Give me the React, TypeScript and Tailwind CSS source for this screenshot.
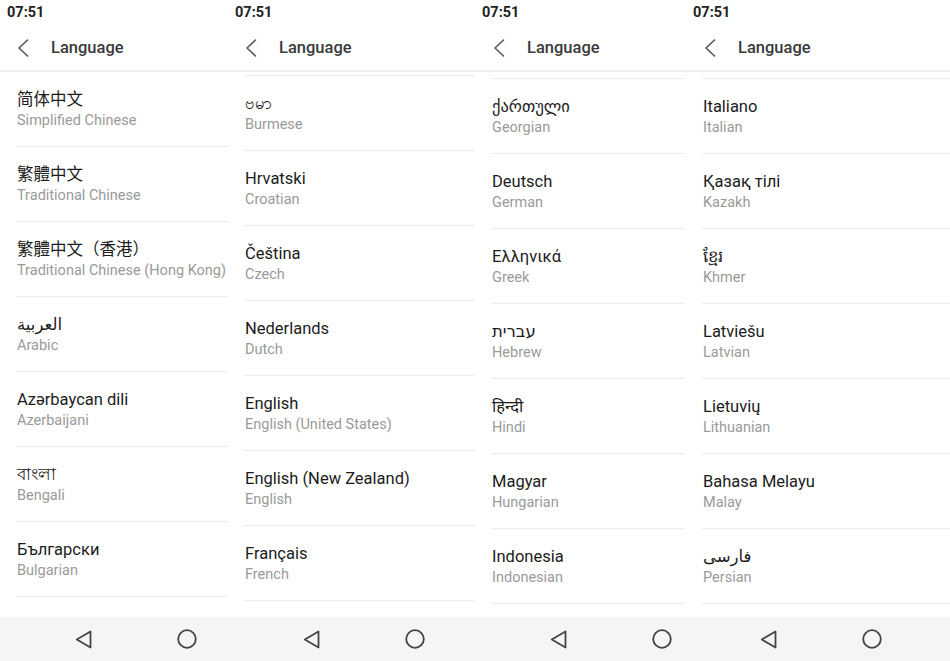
import React from "react";

type Item = [string, string, string?];

type Panel = {
  width: string;
  timePl: string;
  headPl: string;
  listPl: string;
  listPr: string;
  spacer: string | null;
  navPl: string;
  items: Item[];
};

const FONT = 'Roboto, "Noto Sans", "DejaVu Sans", "Noto Sans CJK SC", sans-serif';
const FONT_TC = 'Roboto, "Noto Sans", "Noto Sans CJK TC", sans-serif';

const panels: Panel[] = [
  {
    width: "w-[233px]",
    timePl: "pl-[7px]",
    headPl: "pl-[17px]",
    listPl: "pl-[16px]",
    listPr: "pr-[5px]",
    spacer: null,
    navPl: "pl-[75px]",
    items: [
      ["简体中文", "Simplified Chinese"],
      ["繁體中文", "Traditional Chinese", "tc"],
      ["繁體中文（香港）", "Traditional Chinese (Hong Kong)", "tc"],
      ["العربية", "Arabic"],
      ["Azərbaycan dili", "Azerbaijani"],
      ["বাংলা", "Bengali"],
      ["Български", "Bulgarian"],
    ],
  },
  {
    width: "w-[245px]",
    timePl: "pl-[2px]",
    headPl: "pl-[12px]",
    listPl: "pl-[11px]",
    listPr: "pr-[3px]",
    spacer: "h-[4px]",
    navPl: "pl-[70px]",
    items: [
      ["ဗမာ", "Burmese"],
      ["Hrvatski", "Croatian"],
      ["Čeština", "Czech"],
      ["Nederlands", "Dutch"],
      ["English", "English (United States)"],
      ["English (New Zealand)", "English"],
      ["Français", "French"],
    ],
  },
  {
    width: "w-[212px]",
    timePl: "pl-[4px]",
    headPl: "pl-[15px]",
    listPl: "pl-[13px]",
    listPr: "pr-[5px]",
    spacer: "h-[7px]",
    navPl: "pl-[72px]",
    items: [
      ["ქართული", "Georgian"],
      ["Deutsch", "German"],
      ["Ελληνικά", "Greek"],
      ["עברית", "Hebrew"],
      ["हिन्दी", "Hindi"],
      ["Magyar", "Hungarian"],
      ["Indonesia", "Indonesian"],
    ],
  },
  {
    width: "w-[260px]",
    timePl: "pl-[3px]",
    headPl: "pl-[14px]",
    listPl: "pl-[12px]",
    listPr: "pr-0",
    spacer: "h-[7px]",
    navPl: "pl-[70px]",
    items: [
      ["Italiano", "Italian"],
      ["Қазақ тілі", "Kazakh"],
      ["ខ្មែរ", "Khmer"],
      ["Latviešu", "Latvian"],
      ["Lietuvių", "Lithuanian"],
      ["Bahasa Melayu", "Malay"],
      ["فارسی", "Persian"],
    ],
  },
];

function Chevron() {
  return (
    <svg width="12" height="18" viewBox="0 0 12 18" fill="none">
      <path d="M10.5 1 L2 9 L10.5 17" stroke="#555" strokeWidth="1.6" strokeLinecap="round" strokeLinejoin="round" />
    </svg>
  );
}

function NavBack() {
  return (
    <svg width="17" height="19" viewBox="0 0 17 19" fill="none">
      <path d="M15.5 1.5 L15.5 17.5 L1.8 9.5 Z" stroke="#444" strokeWidth="1.8" strokeLinejoin="round" />
    </svg>
  );
}

function NavHome() {
  return (
    <svg width="20" height="20" viewBox="0 0 20 20" fill="none">
      <circle cx="10" cy="10" r="8.8" stroke="#444" strokeWidth="1.8" />
    </svg>
  );
}

function PanelView({ p }: { p: Panel }) {
  return (
    <div className={`${p.width} shrink-0 h-full flex flex-col bg-white overflow-hidden`}>
      <div className={`h-[26px] flex items-center ${p.timePl}`}>
        <span className="text-[14.5px] font-bold text-[#222] leading-none">07:51</span>
      </div>
      <div className={`h-[44px] flex items-center ${p.headPl} border-b-2 border-[#efefef] box-content`}>
        <Chevron />
        <span className="ml-[22px] text-[16.5px] font-medium text-[#3a3a3a]">Language</span>
      </div>
      <div className={`flex-1 overflow-hidden ${p.listPl} ${p.listPr}`}>
        {p.spacer && <div className={`${p.spacer} border-b border-[#ececec]`} />}
        {p.items.map(([a, b, tc], i) => (
          <div key={i} className="h-[75px] border-b border-[#ececec] pt-[18px] pl-[1px]">
            <div
              className="text-[16.5px] leading-[20px] text-[#1c1c1c] whitespace-nowrap"
              style={tc ? { fontFamily: FONT_TC } : undefined}
            >
              {a}
            </div>
            <div className="mt-[2px] text-[14.5px] leading-[18px] text-[#9a9a9a] whitespace-nowrap">{b}</div>
          </div>
        ))}
      </div>
      <div className={`h-[44px] shrink-0 bg-[#f5f5f5] flex items-center gap-[85px] ${p.navPl}`}>
        <NavBack />
        <NavHome />
      </div>
    </div>
  );
}

export default function App() {
  return (
    <div className="w-[950px] h-[661px] flex bg-white overflow-hidden" style={{ fontFamily: FONT }}>
      {panels.map((p, i) => (
        <PanelView key={i} p={p} />
      ))}
    </div>
  );
}
